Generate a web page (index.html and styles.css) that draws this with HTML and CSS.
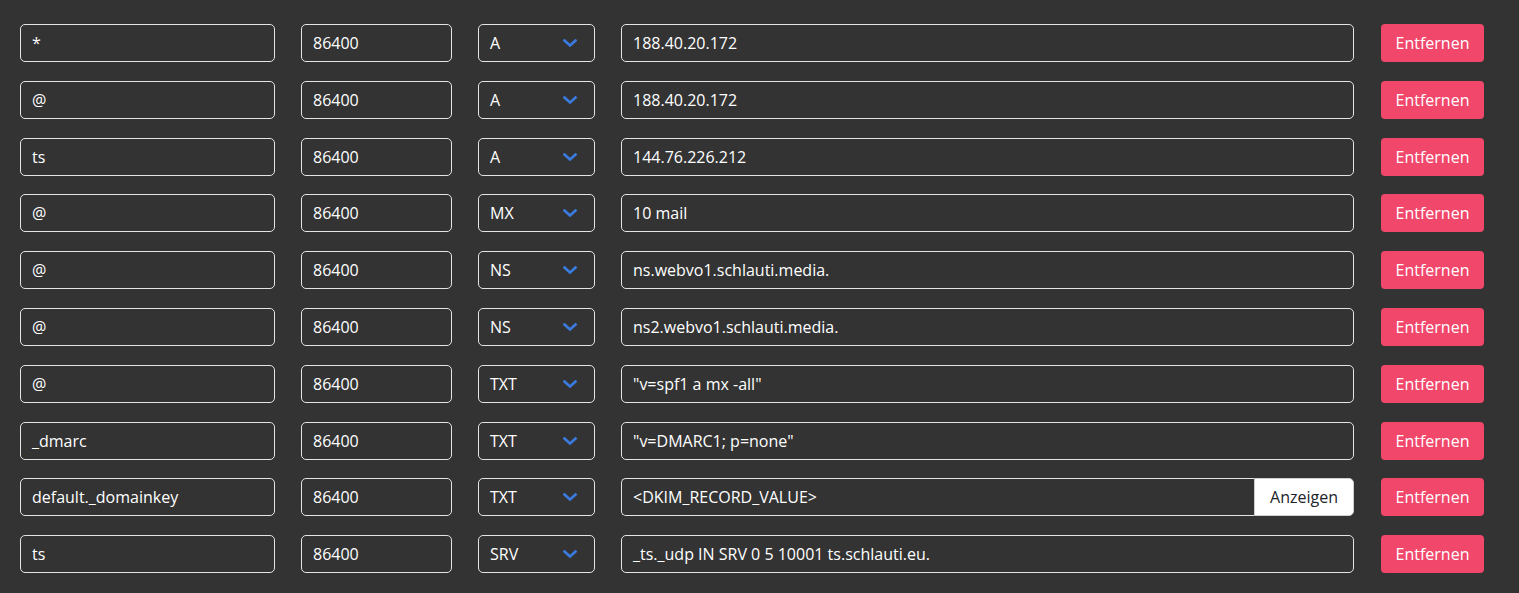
FILE: index.html
```html
<!DOCTYPE html>
<html lang="de">
<head>
<meta charset="utf-8">
<title>DNS</title>
<link rel="stylesheet" href="styles.css">
</head>
<body>
<div class="records">
  <div class="row">
    <div class="field c-name">*</div>
    <div class="field c-ttl">86400</div>
    <div class="field select c-type">A<svg class="chev" viewBox="0 0 14 8"><path d="M1.5 1.5 7 6.5l5.5-5"/></svg></div>
    <div class="field c-val">188.40.20.172</div>
    <button class="btn-del">Entfernen</button>
  </div>
  <div class="row">
    <div class="field c-name">@</div>
    <div class="field c-ttl">86400</div>
    <div class="field select c-type">A<svg class="chev" viewBox="0 0 14 8"><path d="M1.5 1.5 7 6.5l5.5-5"/></svg></div>
    <div class="field c-val">188.40.20.172</div>
    <button class="btn-del">Entfernen</button>
  </div>
  <div class="row">
    <div class="field c-name">ts</div>
    <div class="field c-ttl">86400</div>
    <div class="field select c-type">A<svg class="chev" viewBox="0 0 14 8"><path d="M1.5 1.5 7 6.5l5.5-5"/></svg></div>
    <div class="field c-val">144.76.226.212</div>
    <button class="btn-del">Entfernen</button>
  </div>
  <div class="row">
    <div class="field c-name">@</div>
    <div class="field c-ttl">86400</div>
    <div class="field select c-type">MX<svg class="chev" viewBox="0 0 14 8"><path d="M1.5 1.5 7 6.5l5.5-5"/></svg></div>
    <div class="field c-val">10 mail</div>
    <button class="btn-del">Entfernen</button>
  </div>
  <div class="row">
    <div class="field c-name">@</div>
    <div class="field c-ttl">86400</div>
    <div class="field select c-type">NS<svg class="chev" viewBox="0 0 14 8"><path d="M1.5 1.5 7 6.5l5.5-5"/></svg></div>
    <div class="field c-val">ns.webvo1.schlauti.media.</div>
    <button class="btn-del">Entfernen</button>
  </div>
  <div class="row">
    <div class="field c-name">@</div>
    <div class="field c-ttl">86400</div>
    <div class="field select c-type">NS<svg class="chev" viewBox="0 0 14 8"><path d="M1.5 1.5 7 6.5l5.5-5"/></svg></div>
    <div class="field c-val">ns2.webvo1.schlauti.media.</div>
    <button class="btn-del">Entfernen</button>
  </div>
  <div class="row">
    <div class="field c-name">@</div>
    <div class="field c-ttl">86400</div>
    <div class="field select c-type">TXT<svg class="chev" viewBox="0 0 14 8"><path d="M1.5 1.5 7 6.5l5.5-5"/></svg></div>
    <div class="field c-val">"v=spf1 a mx -all"</div>
    <button class="btn-del">Entfernen</button>
  </div>
  <div class="row">
    <div class="field c-name">_dmarc</div>
    <div class="field c-ttl">86400</div>
    <div class="field select c-type">TXT<svg class="chev" viewBox="0 0 14 8"><path d="M1.5 1.5 7 6.5l5.5-5"/></svg></div>
    <div class="field c-val">"v=DMARC1; p=none"</div>
    <button class="btn-del">Entfernen</button>
  </div>
  <div class="row">
    <div class="field c-name">default._domainkey</div>
    <div class="field c-ttl">86400</div>
    <div class="field select c-type">TXT<svg class="chev" viewBox="0 0 14 8"><path d="M1.5 1.5 7 6.5l5.5-5"/></svg></div>
    <div class="group c-val">
      <div class="field grow">&lt;DKIM_RECORD_VALUE&gt;</div>
      <button class="btn-show">Anzeigen</button>
    </div>
    <button class="btn-del">Entfernen</button>
  </div>
  <div class="row">
    <div class="field c-name">ts</div>
    <div class="field c-ttl">86400</div>
    <div class="field select c-type">SRV<svg class="chev" viewBox="0 0 14 8"><path d="M1.5 1.5 7 6.5l5.5-5"/></svg></div>
    <div class="field c-val">_ts._udp IN SRV 0 5 10001 ts.schlauti.eu.</div>
    <button class="btn-del">Entfernen</button>
  </div>
</div>
</body>
</html>
```

FILE: styles.css
```css
html, body {
  margin: 0;
  padding: 0;
  background: #333333;
}
body {
  font-family: "Open Sans", "Liberation Sans", sans-serif;
  font-size: 16px;
  color: #ffffff;
}
.records {
  display: flex;
  flex-direction: column;
  gap: 18.8px;
  padding: 24px 0 0 20px;
}
.row {
  display: flex;
  gap: 26px;
  height: 38px;
}
.c-name { width: 255px; }
.c-ttl { width: 151px; }
.c-type { width: 117px; }
.c-val { width: 733px; }
.field {
  box-sizing: border-box;
  flex: none;
  height: 38px;
  border: 1px solid #e4e4e4;
  border-radius: 5px;
  padding: 0 11px;
  display: flex;
  align-items: center;
  white-space: nowrap;
  overflow: hidden;
  line-height: 1;
}
.select {
  justify-content: space-between;
  padding-right: 17px;
}
.chev {
  width: 14px;
  height: 8px;
  fill: none;
  stroke: #3a7be0;
  stroke-width: 2.6;
  stroke-linecap: square;
}
.group {
  display: flex;
  flex: none;
  height: 38px;
}
.group .grow {
  flex: 1;
  border-radius: 5px 0 0 5px;
  border-right: none;
}
.btn-show {
  box-sizing: border-box;
  width: 100px;
  height: 38px;
  background: #ffffff;
  color: #212529;
  border: 1px solid #cfcfcf;
  border-radius: 0 5px 5px 0;
  font-family: inherit;
  font-size: 16px;
  padding: 0;
}
.btn-del {
  box-sizing: border-box;
  flex: none;
  width: 103px;
  margin-left: 1px;
  height: 38px;
  background: #f1476b;
  color: #ffffff;
  border: none;
  border-radius: 4px;
  font-family: inherit;
  font-size: 16px;
  padding: 0;
}
```
